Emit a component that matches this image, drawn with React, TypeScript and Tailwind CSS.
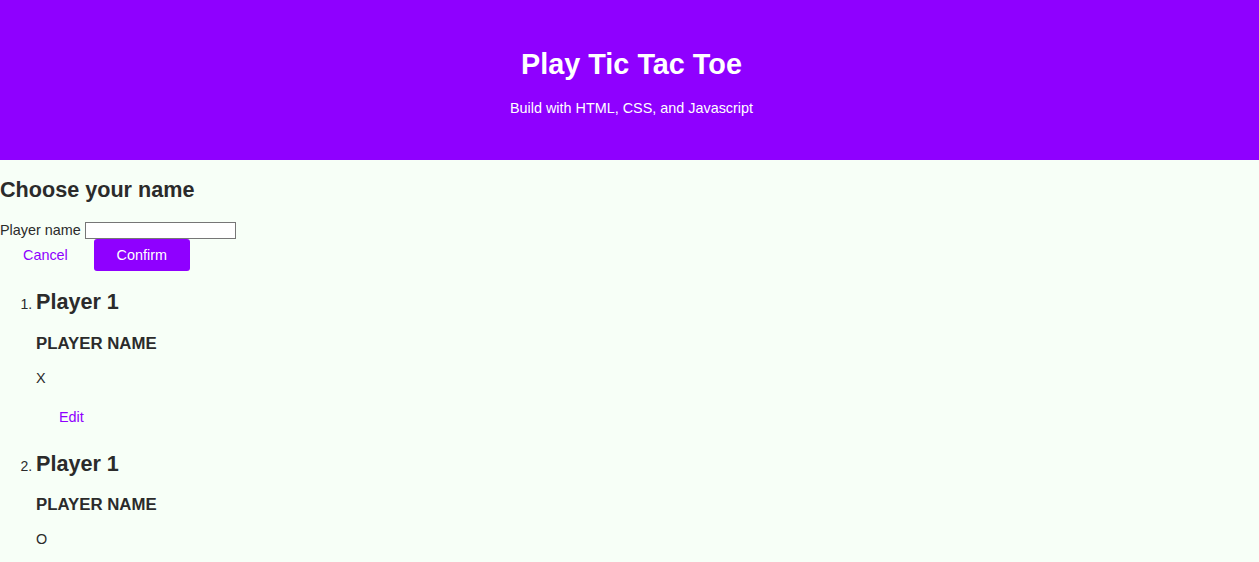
import React from "react";

const players = [
  { title: "Player 1", symbol: "X", edit: true },
  { title: "Player 1", symbol: "O", edit: false },
];

export default function App() {
  return (
    <div className="min-h-[562px] bg-[#f7fff7] text-[#2b2b2b] font-['Liberation_Sans',Arial,sans-serif]">
      <header className="h-[160px] bg-[#8f00ff] text-white flex flex-col items-center pt-[47px] pl-[4px]">
        <h1 className="text-[28.8px] font-bold leading-[34px]">Play Tic Tac Toe</h1>
        <p className="text-[14.4px] leading-[17px] mt-[19px]">Build with HTML, CSS, and Javascript</p>
      </header>

      <section>
        <h2 className="text-[21.6px] font-bold leading-[26px] mt-[17px]">Choose your name</h2>
        <div className="mt-[19px] flex items-center text-[14.4px] leading-[17px]">
          <label>Player name</label>
          <input type="text" className="ml-[4px] w-[151px] h-[17px] bg-white border border-[#767676]" />
        </div>
        <div className="flex items-center">
          <button className="text-[#8f00ff] text-[14.4px] pl-[23px] pr-[26px] h-[32px] pt-[1px]">Cancel</button>
          <button className="bg-[#8f00ff] text-white text-[14.4px] w-[96px] h-[32px] rounded-[3px] pt-[1px]">Confirm</button>
        </div>
      </section>

      <ol className="list-decimal pl-[36px] mt-[18px]">
        {players.map((p, i) => (
          <li key={i} className="marker:text-[14px]">
            <h2 className="text-[21.6px] font-bold leading-[26px]">{p.title}</h2>
            <h3 className="text-[16.8px] font-bold leading-[20px] mt-[18.5px]">PLAYER NAME</h3>
            <p className="text-[14.4px] leading-[17px] mt-[16px]">{p.symbol}</p>
            {p.edit && (
              <button className="text-[#8f00ff] text-[14.4px] leading-[17px] ml-[23px] mt-[22px] block mb-[25px]">Edit</button>
            )}
          </li>
        ))}
      </ol>
    </div>
  );
}
